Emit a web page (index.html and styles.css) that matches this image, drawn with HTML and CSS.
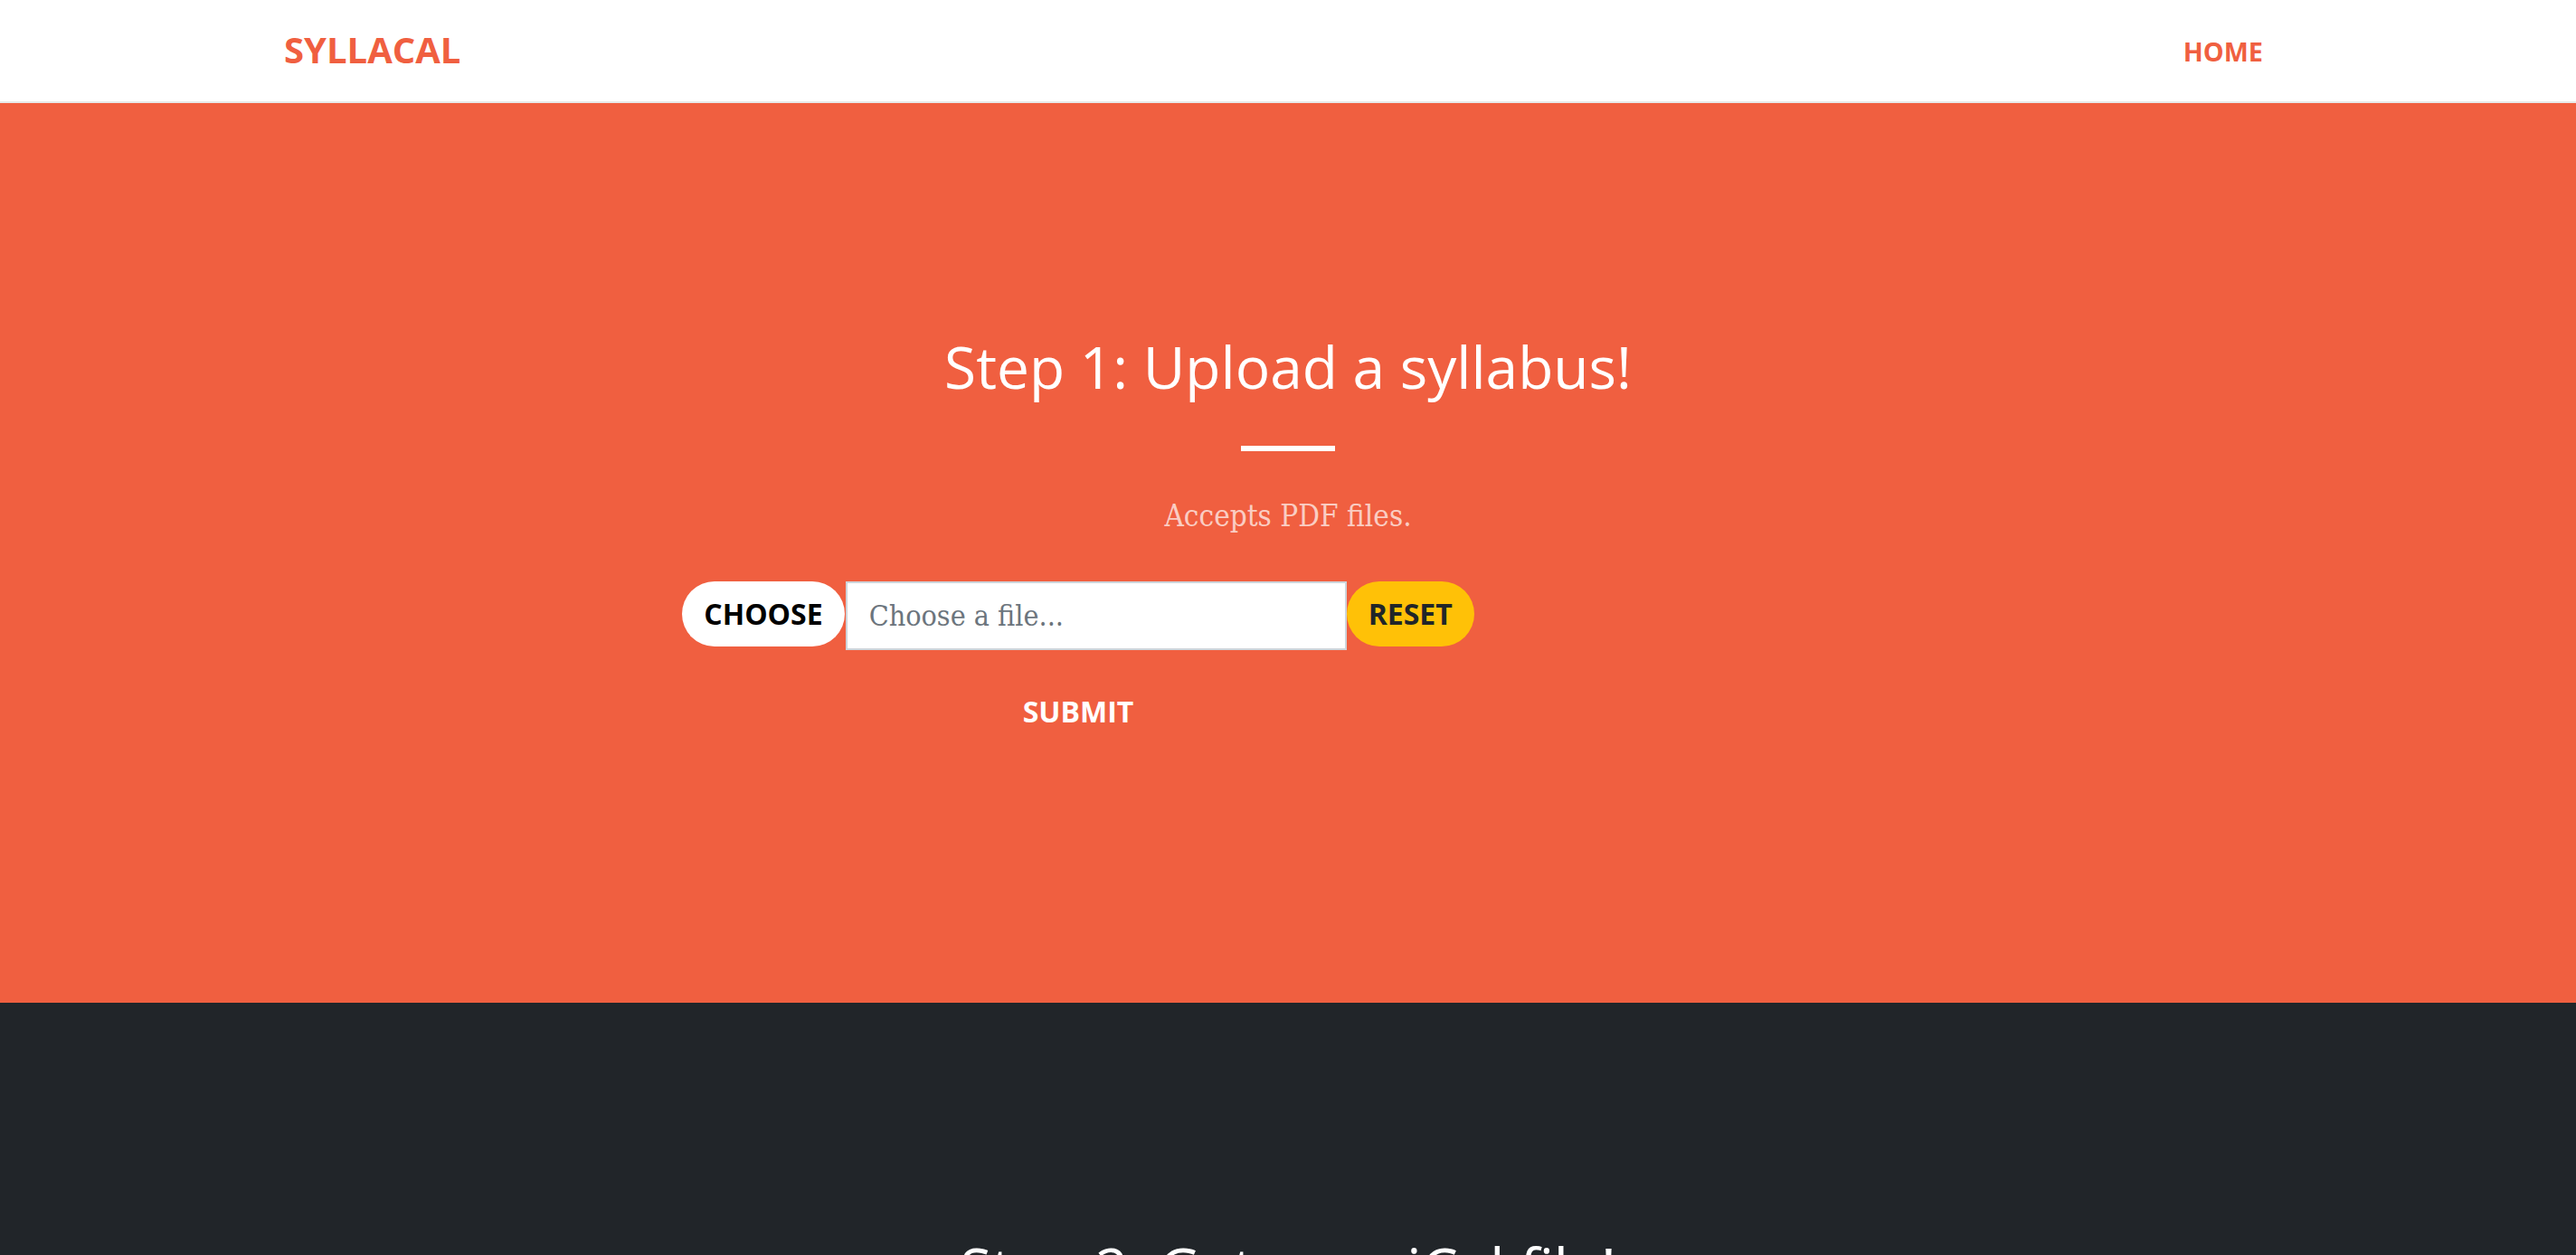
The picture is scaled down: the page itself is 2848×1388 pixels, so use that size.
FILE: index.html
```html
<!DOCTYPE html>
<html lang="en">
<head>
    <meta charset="UTF-8">
    <meta name="viewport" content="width=device-width, initial-scale=1.0">
    <title>SyllaCal</title>
    <link rel="stylesheet" href="styles.css">
</head>
<body>
    <nav class="navbar">
        <div class="container nav-inner">
            <a class="brand" href="#">SyllaCal</a>
            <a class="nav-link" href="#">Home</a>
        </div>
    </nav>

    <!-- Step 1 -->
    <section class="step step-upload">
        <div class="container">
            <h2>Step 1: Upload a syllabus!</h2>
            <hr class="divider">
            <p class="faded">Accepts PDF files.</p>
            <form class="upload-form">
                <div class="file-row">
                    <label class="btn btn-light" for="syllabus">Choose</label>
                    <input type="file" id="syllabus" accept=".pdf" hidden>
                    <input type="text" class="file-name" placeholder="Choose a file..." readonly>
                    <button type="reset" class="btn btn-warning">Reset</button>
                </div>
                <button type="submit" class="btn btn-submit">Submit</button>
            </form>
        </div>
    </section>

    <!-- Step 2 -->
    <section class="step step-download">
        <div class="container">
            <h2>Step 2: Get your iCal file!</h2>
            <hr class="divider">
            <p class="faded">Import it into Google Calendar, Outlook or Apple Calendar.</p>
            <button class="btn btn-primary">Download</button>
        </div>
    </section>
</body>
</html>
```

FILE: styles.css
```css
* {
    box-sizing: border-box;
}

body {
    margin: 0;
    font-family: 'Open Sans', 'Helvetica Neue', Arial, sans-serif;
    color: #212529;
    background-color: #fff;
}

a {
    text-decoration: none;
}

.container {
    width: 2280px;
    margin: 0 auto;
    padding: 0 30px;
}

/* navbar */
.navbar {
    height: 114px;
    background-color: #fff;
    border-bottom: 2px solid rgba(33, 37, 41, 0.1);
}

.nav-inner {
    height: 100%;
    display: flex;
    align-items: center;
    justify-content: space-between;
}

.brand {
    font-size: 40px;
    font-weight: 700;
    text-transform: uppercase;
    color: #f05f40;
    margin-top: -4px;
}

.nav-link {
    font-size: 28.8px;
    font-weight: 700;
    text-transform: uppercase;
    color: #f05f40;
    padding: 16px 32px 16px 0;
}

/* sections */
.step {
    text-align: center;

    h2 {
        margin: 0;
        font-size: 64px;
        font-weight: 400;
        line-height: 1.2;
        color: #fff;
    }
}

.step-upload {
    background-color: #f05f40;
    padding: 254px 0 286px;
}

.step-download {
    background-color: #212529;
    padding: 256px 0;
}

.divider {
    width: 104px;
    height: 6px;
    margin: 48px auto;
    border: 0;
    background-color: #fff;
}

.faded {
    margin: 0 0 48px;
    font-family: 'DejaVu Serif Condensed', 'DejaVu Serif', Georgia, serif;
    font-stretch: semi-condensed;
    font-size: 33px;
    line-height: 48px;
    color: rgba(255, 255, 255, 0.7);
}

/* upload form */
.upload-form {
    width: 872px;
    margin-left: 442px;
    display: flex;
    flex-direction: column;
    align-items: center;
}

.file-row {
    display: flex;
    align-items: flex-start;
}

.btn {
    height: 72px;
    padding: 0 24px;
    display: inline-flex;
    align-items: center;
    border: none;
    border-radius: 300px;
    font-family: 'Open Sans', Arial, sans-serif;
    font-size: 32px;
    font-weight: 700;
    text-transform: uppercase;
    cursor: pointer;

    &.btn-light {
        background-color: #fff;
        color: #000;
        margin-right: 1px;
    }

    &.btn-warning {
        background-color: #ffc107;
        color: #212529;
    }

    &.btn-submit {
        margin-top: 32px;
        background-color: transparent;
        color: #fff;
    }

    &.btn-primary {
        background-color: #f05f40;
        color: #fff;
        padding: 0 64px;
    }
}

.file-name {
    width: 554px;
    height: 76px;
    padding: 0 24px;
    border: 2px solid #ced4da;
    border-radius: 0;
    background-color: #fff;
    font-family: 'DejaVu Serif Condensed', 'DejaVu Serif', Georgia, serif;
    font-stretch: semi-condensed;
    font-size: 32px;
    color: #495057;

    &::placeholder {
        color: #6c757d;
    }
}
```
